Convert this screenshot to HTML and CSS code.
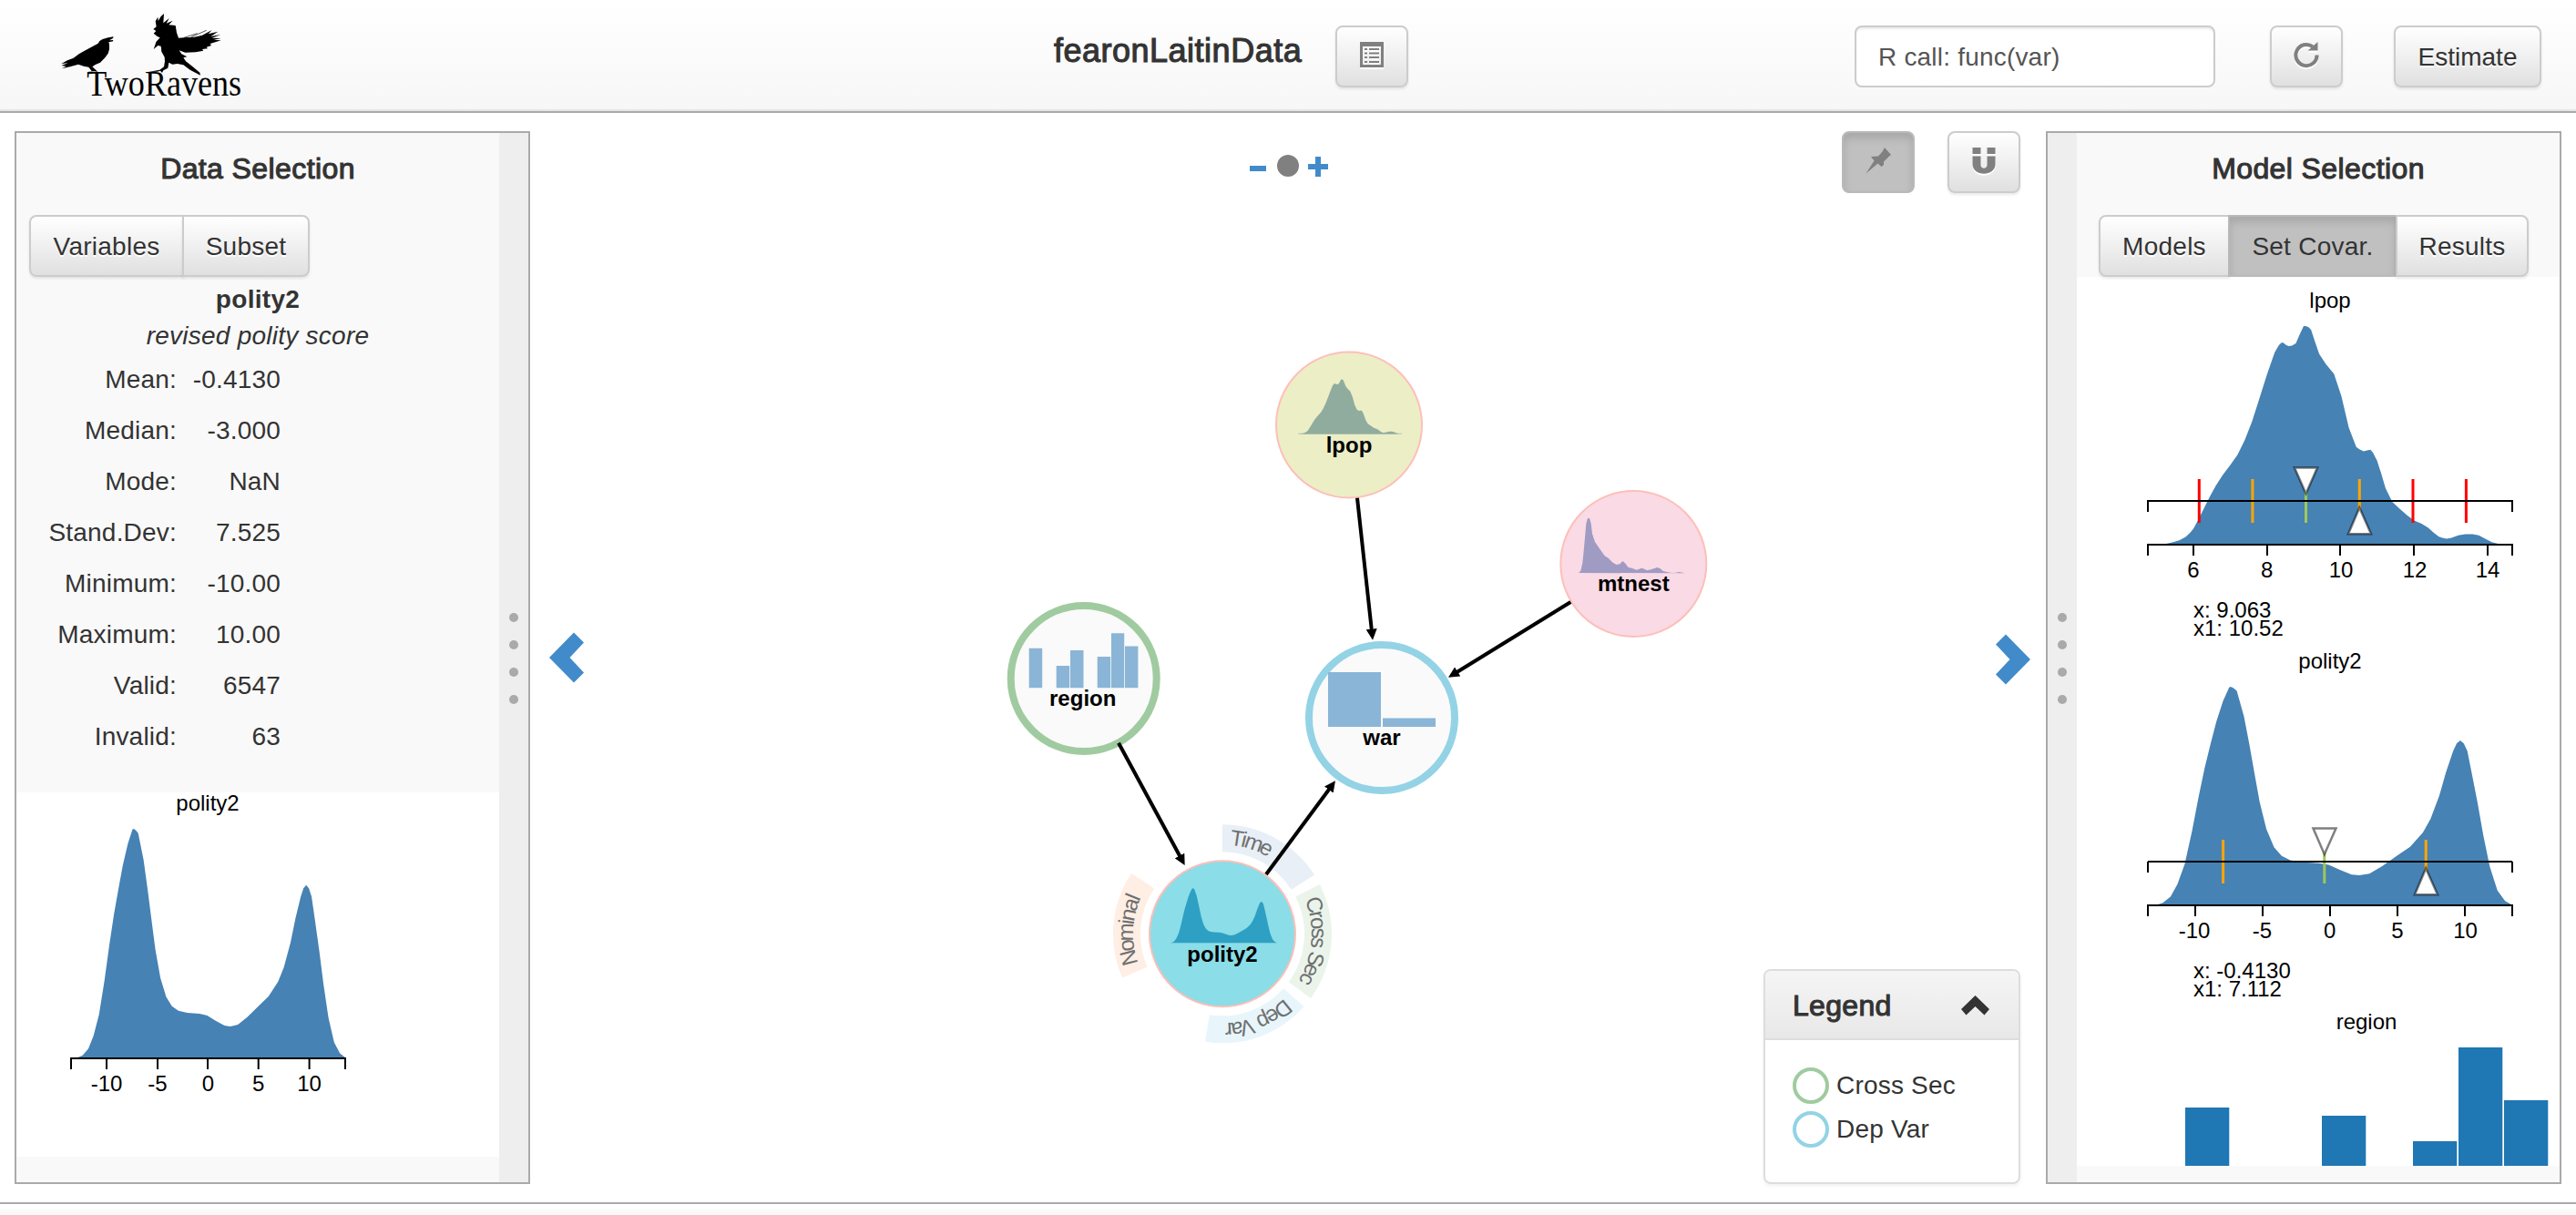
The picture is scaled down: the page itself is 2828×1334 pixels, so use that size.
FILE: index.html
```html
<!DOCTYPE html>
<html lang="en">
<head>
<meta charset="utf-8">
<title>TwoRavens</title>
<link rel="stylesheet" href="styles.css">
</head>
<body>
<header class="navbar">
  <svg class="logo" viewBox="0 0 660 315" role="img" aria-label="TwoRavens">
    <path d="M194 91L176 94L158 99L148 105L143 113L118 127L97 138L80 148L62 161L42 169L22 180L44 178L22 186L38 188L24 196L50 190L78 182L96 188L112 191L122 204L108 206L130 205L142 206L124 190L134 183L150 176L166 160L176 146L180 132L180 116L178 109L193 106L192 102L180 103L192 96Z"/>
    <path d="M360 15L350 24L341 39L340 26L332 40L335 58L325 66L334 72L326 80L338 90L347 94L334 108L331 118L326 132L340 120L350 122L352 140L362 158L363 172L360 190L346 200L308 207L338 206L348 203L354 210L358 202L373 194L376 176L388 182L404 180L424 184L446 200L480 218L478 209L455 190L432 172L424 160L436 157L418 148L410 136L430 143L464 142L490 137L486 132L504 130L500 125L516 120L512 114L548 103L524 101L548 96L518 95L547 84L514 90L538 74L506 82L518 69L486 86L460 92L426 94L408 95L402 78L398 54L376 52L389 38L368 47L377 30L358 46Z"/>
    <g class="feather"><path d="M426 94L470 80M450 92L500 70"/></g>
    <text class="wordmark" x="106" y="284" textLength="509" lengthAdjust="spacingAndGlyphs">TwoRavens</text>
  </svg>
  <h1 class="dataset">fearonLaitinData</h1>
  <button class="btn icon-btn about" aria-label="Data info">
    <svg width="26" height="28" viewBox="0 0 26 28"><path fill-rule="evenodd" d="M0 0H26V28H0ZM3 5V25H23V5Z"/><path d="M5 7h3v2H5zM10 7h11v2H10zM5 11.500h3v2H5zM10 11.500h11v2H10zM5 16h3v2H5zM10 16h11v2H10zM5 21h3v2H5zM10 21h11v2H10z"/></svg>
  </button>
  <input class="rcall" type="text" value="R call: func(var)" aria-label="R call">
  <button class="btn icon-btn reset" aria-label="Reset">
    <svg width="28" height="28" viewBox="0 0 28 28"><path class="ring" d="M25.600 14.500A11.600 11.600 0 1 1 21 5.300"/><path d="M26.500 0V9.500H15.500L20 6L22.500 3.500Z"/></svg>
  </button>
  <button class="btn estimate">Estimate</button>
</header>

<main class="main">
  <aside class="panel">
    <div class="panel-body">
      <h2 class="panel-title">Data Selection</h2>
      <div class="btn-group left-tabs">
        <button class="btn tab-variables">Variables</button>
        <button class="btn tab-subset">Subset</button>
      </div>
      <div class="var-name">polity2</div>
      <div class="var-label">revised polity score</div>
      <dl class="stats">
        <dt>Mean:</dt><dd>-0.4130</dd>
        <dt>Median:</dt><dd>-3.000</dd>
        <dt>Mode:</dt><dd>NaN</dd>
        <dt>Stand.Dev:</dt><dd>7.525</dd>
        <dt>Minimum:</dt><dd>-10.00</dd>
        <dt>Maximum:</dt><dd>10.00</dd>
        <dt>Valid:</dt><dd>6547</dd>
        <dt>Invalid:</dt><dd>63</dd>
      </dl>
      <svg class="plot summary-plot" viewBox="18 870 530 400">
        <defs>
          <path id="polity" d="M0 1L.021 1L.042 .989L.063 .960L.082 .903L.102 .810L.1215 .664L.1397 .505L.1564 .372L.172 .266L.1885 .159L.2067 .066L.2235 .003L.2275 0L.2346 .005L.2444 .019L.264 .135L.279 .266L.293 .398L.307 .527L.3254 .651L.3464 .734L.3673 .774L.391 .794L.423 .803L.468 .807L.496 .815L.5265 .838L.5587 .859L.5796 .863L.6075 .855L.6425 .821L.683 .773L.719 .732L.754 .667L.775 .604L.7989 .498L.817 .392L.8366 .295L.8464 .259L.8561 .246L.8659 .259L.8757 .295L.8897 .412L.9036 .531L.919 .677L.937 .823L.958 .932L.979 .980L1 1Z"/>
          <path id="lpop" d="M50 715L70 710L90 703L108 692L121 678L130 665L145 633L160 598L175 563L193 525L213 489L235 455L255 422L275 375L296 313L317 237L338 160L360 87L372 63L380 54L386 56L393 63L400 66L409 64L420 57L430 30L442 0L448 0L456 4L463 12L473 47L486 91L505 125L528 157L549 230L570 333L591 397L601 405L612 411L622 408L631 406L638 415L650 442L662 485L674 532L693 577L713 599L735 621L755 638L775 648L795 662L810 678L825 691L837 696L847 698L861 695L880 687L900 683L920 683L938 687L955 697L975 709L995 715Z"/>
        </defs>
        <text x="228" y="890">polity2</text>
        <use href="#polity" class="area" transform="translate(78 910) scale(301.500 251.500)"/>
        <path class="axis" d="M78 1174V1162H379V1174M117 1162V1174M173 1162V1174M228 1162V1174M283.700 1162V1174M339.600 1162V1174"/>
        <g><text x="117" y="1198">-10</text><text x="173" y="1198">-5</text><text x="228.500" y="1198">0</text><text x="283.700" y="1198">5</text><text x="339.600" y="1198">10</text></g>
      </svg>
    </div>
    <div class="grip"><i></i><i></i><i></i><i></i></div>
  </aside>

  <section class="workspace">
    <svg class="graph" viewBox="582 124 1664 1196">
      <defs>
        <marker id="arrow" viewBox="0 -5 10 10" refX="6" markerWidth="3" markerHeight="3" orient="auto"><path d="M0,-5L10,0L0,5"/></marker>
        <path id="arcTime" d="M0 -120A120 120 0 0 1 101 -64.800L75.700 -48.600A90 90 0 0 0 0 -90Z"/>
        <path id="arcCross" d="M106.900 -54.400A120 120 0 0 1 97 70.600L72.800 53A90 90 0 0 0 80.200 -40.800Z"/>
        <path id="arcDep" d="M89.500 80A120 120 0 0 1 -18.900 118.500L-14.200 88.900A90 90 0 0 0 67.100 60Z"/>
        <path id="arcNom" d="M-109.900 48.100A120 120 0 0 1 -99.900 -66.500L-74.900 -49.900A90 90 0 0 0 -82.500 36.100Z"/>
      </defs>
      <g class="arcs" transform="translate(1342 1025.300)">
        <use href="#arcTime" fill="#e8eff6"/><use href="#arcCross" fill="#ebf4eb"/><use href="#arcDep" fill="#e8f6fb"/><use href="#arcNom" fill="#feeee4"/>
        <text dx="11" dy="22"><textPath href="#arcTime">Time</textPath></text>
        <text dx="11" dy="22"><textPath href="#arcCross">Cross Sec</textPath></text>
        <text dx="11" dy="22"><textPath href="#arcDep">Dep Var</textPath></text>
        <text dx="11" dy="22"><textPath href="#arcNom">Nominal</textPath></text>
      </g>
      <g transform="translate(1481 466.500)">
        <circle class="node" r="80" fill="#eceec6"/>
        <use href="#lpop" fill="#90ac9e" transform="translate(-60 -50) scale(.1162 .0839)"/>
        <path d="M-56 9.700H58" stroke="#90ac9e" stroke-width=".6"/>
        <text y="30">lpop</text>
      </g>
      <g transform="translate(1793.300 619)">
        <circle class="node" r="80" fill="#f9dae5"/>
        <path fill="#9f9bc3" transform="translate(-60.300 -50) scale(.3333)" d="M0 180L7 173L13 148L17 108L21 63L25 18L30 0L36 0L41 18L45 51L54 78L71 103L86 124L98 131L111 145L124 153L136 151L145 141L153 148L163 161L177 165L191 170L209 164L226 172L241 168L259 162L269 166L278 174L301 179L316 180L331 177L351 181Z"/>
        <text y="30">mtnest</text>
      </g>
      <g transform="translate(1189.700 745)">
        <circle class="node cross" r="80"/>
        <g class="bars" transform="translate(-60 10.300)"><path d="M0 0V-43.500H14.500V0ZM30 0V-24.300H44.500V0ZM45.300 0V-41.300H59.800V0ZM75 0V-34.300H89.500V0ZM90.300 0V-60H104.500V0ZM105.300 0V-45.700H119.700V0Z"/></g>
        <text x="-1" y="30">region</text>
      </g>
      <g transform="translate(1517 788)">
        <circle class="node dep" r="80"/>
        <path class="bars" d="M-59 10V-50H-1V10ZM1 10V.500H59V10Z"/>
        <text y="30">war</text>
      </g>
      <g transform="translate(1342 1025.300)">
        <circle class="node" r="80" fill="#8bdde7"/>
        <use href="#polity" fill="#2ea0c3" transform="translate(-60 -50) scale(120 60)"/>
        <text y="30.300">polity2</text>
      </g>
      <g class="links">
        <path d="M1490 546.700L1506.500 697.900"/><path d="M1228 815.700L1298.400 945.800"/><path d="M1390 960L1463.100 861.200"/><path d="M1724.300 661L1594.100 741.200"/>
      </g>
    </svg>
    <div class="toolbar">
      <div class="zoomer">
        <svg width="86" height="24" viewBox="0 0 86 24"><path fill="#428bca" d="M0 12H18V18H0ZM64 10H72V2H78V10H86V16H78V24H72V16H64Z"/><circle cx="42" cy="12" r="12" fill="#808080"/></svg>
      </div>
      <div class="tools">
        <button class="btn icon-btn active" aria-label="Pin nodes"><svg width="28" height="28" viewBox="0 0 28 28"><path d="M21 0L28 8L25.500 10L20 15.500L20 19L17.500 21L13.500 17.500L.5 28.500L9.500 14.500L6 10L14 9.500L18.500 4.500Z"/></svg></button>
        <button class="btn icon-btn" aria-label="Force"><svg width="26" height="29" viewBox="0 0 26 29"><path d="M.5 0H9.500V7H.500ZM16.500 0H25.500V7H16.500ZM.5 9.500H9.500V19C9.500 24 16.500 24 16.500 19V9.500H25.500V18C25.500 32.200 .5 32.200 .5 18Z"/></svg></button>
      </div>
    </div>
    <div class="pager">
      <svg width="39" height="56" viewBox="0 0 39 56"><path d="M0 28L27 0.500L38 11.500L22.500 28L38 44.500L27 55.500Z"/></svg>
      <svg class="next" width="39" height="56" viewBox="0 0 39 56"><path d="M39 28L12 .5L1 11.500L16.500 28L1 44.500L12 55.500Z"/></svg>
    </div>
    <div class="legend">
      <div class="legend-head"><span>Legend</span><svg width="31" height="22" viewBox="0 0 31 22"><path d="M15.500 0L31 15L25.500 21.500L15.500 12L5.500 21.500L0 15Z"/></svg></div>
      <ul class="legend-list">
        <li><i class="ring-green"></i>Cross Sec</li>
        <li><i class="ring-blue"></i>Dep Var</li>
      </ul>
    </div>
  </section>

  <aside class="panel">
    <div class="grip"><i></i><i></i><i></i><i></i></div>
    <div class="panel-body">
      <h2 class="panel-title">Model Selection</h2>
      <div class="btn-group right-tabs">
        <button class="btn tab-models">Models</button>
        <button class="btn tab-covar active">Set Covar.</button>
        <button class="btn tab-results">Results</button>
      </div>
      <svg class="plot covar-plot" viewBox="2280 304 530 976">
        <text x="2558" y="338">lpop</text>
        <use href="#lpop" class="area" transform="translate(2357.600 358) scale(.3877 .3345)"/>
        <path class="axis" d="M2358 610V598H2758V610M2408 598V610M2489 598V610M2569 598V610M2650 598V610M2731 598V610M2358 562V550H2758V562"/>
        <g><text x="2408" y="634">6</text><text x="2488.700" y="634">8</text><text x="2570" y="634">10</text><text x="2651" y="634">12</text><text x="2731" y="634">14</text></g>
        <path class="mark red" d="M2414.300 526V574M2649 526V574M2707.400 526V574"/>
        <path class="mark orange" d="M2472.900 526V574M2590.300 526V574"/>
        <path class="mark green" d="M2531.500 526V574"/>
        <path class="axis" d="M2358 550H2758"/>
        <path class="slider" d="M2519 513.500H2544L2531.500 542ZM2578 586.300H2603L2590.300 557.500Z"/>
        <g class="readout"><text x="2408" y="678">x: 9.063</text><text x="2408" y="698">x1: 10.52</text></g>
        <g transform="translate(0 396)">
          <text x="2558" y="338">polity2</text>
          <use href="#polity" class="area" transform="translate(2357.600 358) scale(401 240)"/>
          <path class="axis" d="M2358 610V598H2758V610M2410 598V610M2484 598V610M2558 598V610M2632 598V610M2706 598V610M2358 562V550"/>
          <path class="axis" d="M2758 562V550"/>
          <g><text x="2409" y="634">-10</text><text x="2483.500" y="634">-5</text><text x="2557.700" y="634">0</text><text x="2632" y="634">5</text><text x="2706.500" y="634">10</text></g>
          <path class="mark orange" d="M2440.600 526V574M2663.200 526V574"/>
          <path class="mark green" d="M2551.800 526V574"/>
          <path class="axis" d="M2358 550H2758"/>
          <path class="slider" d="M2539.500 513.500H2564.500L2551.800 542ZM2651 586.300H2676L2663.200 557.500Z"/>
          <g class="readout"><text x="2408" y="678">x: -0.4130</text><text x="2408" y="698">x1: 7.112</text></g>
        </g>
        <text x="2598" y="1130">region</text>
        <path fill="#1f77b4" d="M2399 1280V1216H2447.300V1280ZM2549 1280V1225H2597.300V1280ZM2649 1280V1253H2697.300V1280ZM2699 1280V1150H2747.300V1280ZM2749 1280V1208H2797.300V1280Z"/>
      </svg>
    </div>
  </aside>
</main>
<footer class="footer"></footer>
</body>
</html>
```
FILE: styles.css
```css
* { box-sizing: border-box; }

body {
  margin: 0;
  height: 1334px;
  overflow: hidden;
  display: flex;
  flex-direction: column;
  background: #fff;
  color: #333;
  font: 28px/40px "Liberation Sans", Arial, sans-serif;
}

h1, h2, ul, dl, dd { margin: 0; padding: 0; }
svg { display: block; overflow: visible; }

/* top bar */
.navbar {
  flex: none;
  height: 124px;
  padding: 28px 38px 0 60px;
  display: flex;
  align-items: flex-start;
  background: linear-gradient(#fff, #f7f7f7) no-repeat 0 0 / 100% 120px, #e5e5e5;
  border-bottom: 2px solid #aaa;
}
.logo { width: 220px; height: 105px; margin-top: -18px; flex: none; }
.logo .feather { stroke: #000; stroke-width: 2; fill: none; }
.wordmark { font: 120px "Liberation Serif", serif; }

/* headings sit between regular and bold */
.dataset, .panel-title, .legend-head {
  font-weight: normal;
  -webkit-text-stroke: 1.1px #333;
}
.dataset {
  width: 309px;
  margin: 10px 0 0 877px;
  font-size: 36px;
  line-height: 36px;
  letter-spacing: .5px;
  white-space: nowrap;
}
.rcall {
  width: 396px;
  height: 68px;
  margin-left: 490px;
  padding: 2px 24px 0;
  border: 2px solid #ccc;
  border-radius: 8px;
  background: #fff;
  box-shadow: inset 0 2px 2px rgba(0, 0, 0, .075);
  color: #555;
  font: inherit;
  letter-spacing: .2px;
}
.reset { margin-left: 60px; }
.estimate { width: 162px; margin-left: 56px; }

/* buttons */
.btn {
  flex: none;
  height: 68px;
  padding: 2px 0 0;
  display: flex;
  align-items: center;
  justify-content: center;
  border: 2px solid #ccc;
  border-radius: 8px;
  background: linear-gradient(#fff, #e0e0e0);
  box-shadow: 0 2px 3px rgba(0, 0, 0, .09);
  color: #333;
  font: 28px/62px "Liberation Sans", Arial, sans-serif;
  text-shadow: 0 2px 0 #fff;
}
.btn.active {
  border-color: #b9b9b9;
  background: #c0c0c0;
  box-shadow: inset 0 6px 10px rgba(0, 0, 0, .125);
  text-shadow: none;
}
.btn.icon-btn { width: 80px; padding: 0 0 4px; fill: #808080; }
.icon-btn svg { filter: drop-shadow(0 2px 0 #fff); }
.icon-btn.active svg { filter: none; }
.icon-btn .ring { fill: none; stroke: #808080; stroke-width: 4; }
.btn-group { display: flex; height: 68px; }
.btn-group .btn { border-radius: 0; letter-spacing: .25px; }
.btn-group .btn + .btn { margin-left: -2px; }
.btn-group .btn:first-child { border-radius: 8px 0 0 8px; }
.btn-group .btn:last-child { border-radius: 0 8px 8px 0; }
.left-tabs { margin-left: 14px; }
.right-tabs { margin-left: 24px; }
.tab-variables { width: 170px; }
.tab-subset { width: 140px; }
.tab-models { width: 144px; }
.tab-covar { width: 186px; }
.tab-results { width: 146px; }

/* side panels */
.main {
  flex: none;
  height: 1196px;
  padding: 20px 16px;
  display: flex;
}
.panel {
  width: 566px;
  display: flex;
  border: 2px solid #aaa;
  background: #f9f9f9;
}
.panel-body { flex: 1; padding-top: 19px; }
.panel-title {
  margin-bottom: 31px;
  font-size: 32px;
  line-height: 40px;
  letter-spacing: .4px;
  text-align: center;
}
.grip {
  width: 32px;
  display: flex;
  flex-direction: column;
  align-items: center;
  gap: 20px;
  padding-top: 527px;
  background: #eee;
}
.grip i { width: 10px; height: 10px; border-radius: 50%; background: #aaa; }
.var-name { margin-top: 5px; text-align: center; font-weight: bold; letter-spacing: .3px; }
.var-label { text-align: center; font-style: italic; letter-spacing: .25px; }
.stats {
  display: grid;
  grid-template-columns: 176px 114px;
  grid-auto-rows: 56px;
  line-height: 56px;
  text-align: right;
  letter-spacing: .2px;
}
.plot { background: #fff; }
.plot text {
  fill: #000;
  font-size: 24px;
  text-anchor: middle;
}
.plot .readout text { text-anchor: start; }
.summary-plot { width: 530px; height: 400px; margin-top: 33px; }
.covar-plot { width: 530px; height: 976px; }
.area { fill: #4682b4; }
.axis { fill: none; stroke: #000; stroke-width: 2; }
.mark { fill: none; stroke-width: 3; }
.red { stroke: #f00; }
.orange { stroke: #ffa500; }
.green { stroke: #9fc85a; }
.slider { fill: #fff; stroke: #000; stroke-opacity: .5; stroke-width: 2.500; }

/* network of variables */
.workspace {
  position: relative;
  flex: 1;
  display: flex;
  flex-direction: column;
  padding: 0 28px 0 21px;
}
.graph {
  position: absolute;
  left: 0;
  top: -20px;
  width: 1664px;
  height: 1196px;
}
.graph text { fill: #000; font-size: 24px; font-weight: bold; text-anchor: middle; }
.graph .arcs text { fill: #6e7070; font-weight: normal; text-anchor: start; }
.node { stroke: #fdbfb9; stroke-width: 2; }
.node.cross { fill: #fafafa; stroke: #a0cba0; stroke-width: 8; }
.node.dep { fill: #fafafa; stroke: #93d3e5; stroke-width: 8; }
.bars { fill: #8ab5d6; }
.links path { fill: none; stroke: #000; stroke-width: 4; marker-end: url(#arrow); }
.links { fill: #000; }
.toolbar { position: relative; display: flex; height: 68px; }
.zoomer { margin: 26px 0 0 769px; }
.tools { display: flex; gap: 36px; margin-left: auto; }
.pager {
  position: relative;
  flex: 1;
  display: flex;
  justify-content: space-between;
  align-items: flex-start;
  padding: 482px 0 0;
  margin-right: -11px;
  fill: #428bca;
}
.pager .next { margin-top: 2px; }
.legend {
  position: relative;
  align-self: flex-end;
  width: 282px;
  height: 236px;
  border: 2px solid #ddd;
  border-radius: 8px;
  background: #fff;
  box-shadow: 0 2px 4px rgba(0, 0, 0, .06);
}
.legend-head {
  height: 76px;
  padding: 2px 32px 0 30px;
  display: flex;
  align-items: center;
  justify-content: space-between;
  border-bottom: 2px solid #ddd;
  border-radius: 6px 6px 0 0;
  background: linear-gradient(#f5f5f5, #e8e8e8);
  font-size: 32px;
  letter-spacing: .3px;
  fill: #333;
}
.legend-list { list-style: none; padding: 30px; letter-spacing: .2px; }
.legend-list li { display: flex; align-items: center; gap: 8px; height: 40px; margin-bottom: 8px; }
.legend-list i { width: 40px; height: 40px; border: 4px solid; border-radius: 50%; }
.legend-list .ring-green { border-color: #a0cba0; }
.legend-list .ring-blue { border-color: #93d3e5; }

.footer {
  flex: none;
  height: 14px;
  border-top: 2px solid #aaa;
  background: linear-gradient(#fff 6px, #f9f9f9 6px);
}
```
